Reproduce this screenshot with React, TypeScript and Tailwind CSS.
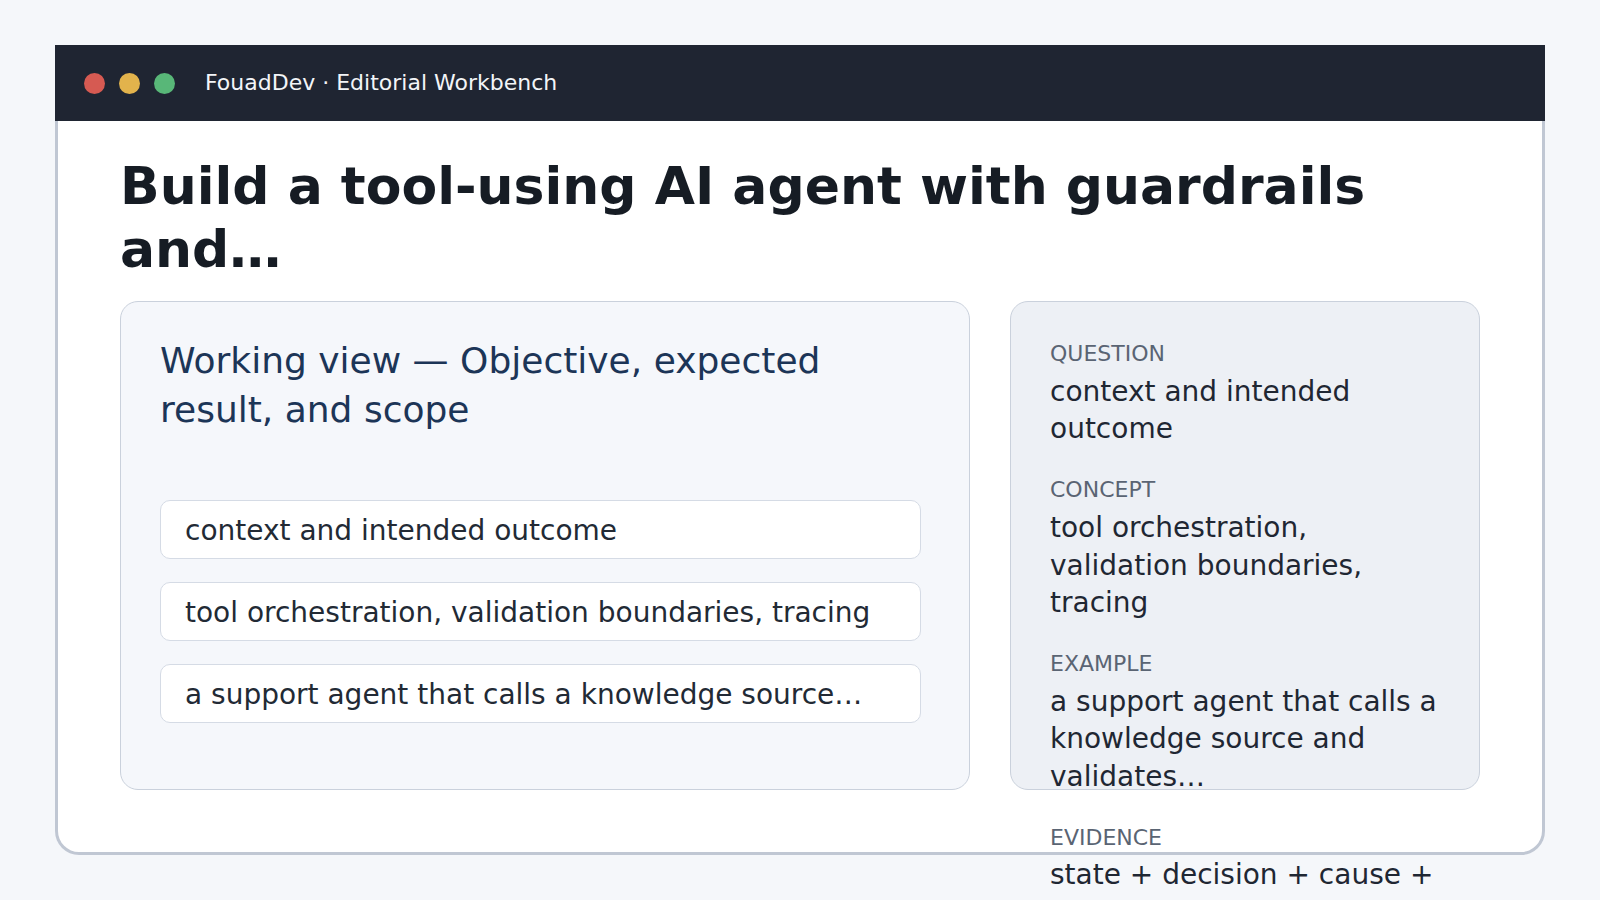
import React from "react";

const rows = [
  "context and intended outcome",
  "tool orchestration, validation boundaries, tracing",
  "a support agent that calls a knowledge source…",
];

const sections = [
  { label: "QUESTION", body: "context and intended outcome" },
  { label: "CONCEPT", body: "tool orchestration, validation boundaries, tracing" },
  { label: "EXAMPLE", body: "a support agent that calls a knowledge source and validates…" },
  { label: "EVIDENCE", body: "state + decision + cause + next action" },
];

export default function App() {
  return (
    <div
      className="min-h-screen bg-[#f5f7fa] pt-[45px] px-[55px]"
      style={{ fontFamily: '"DejaVu Sans", Verdana, sans-serif' }}
    >
      <div>
        <div className="h-[76px] bg-[#1f2532] flex items-center pl-[29px]">
          <div className="flex items-center gap-[14px]">
            <span className="w-[21px] h-[21px] rounded-full bg-[#d65a52]" />
            <span className="w-[21px] h-[21px] rounded-full bg-[#e2b34c]" />
            <span className="w-[21px] h-[21px] rounded-full bg-[#58b778]" />
          </div>
          <span className="ml-[30px] text-[22px] text-[#f3f5f8] leading-none">
            FouadDev · Editorial Workbench
          </span>
        </div>
        <div className="h-[734px] bg-white border-[3px] border-t-0 border-[#c0c7d3] rounded-b-[24px] pl-[62px] pr-[62px] pt-[34px]">
          <h1 className="text-[52px] leading-[63px] font-bold text-[#161c24]">
            Build a tool-using AI agent with guardrails and…
          </h1>
          <div className="mt-[20px] flex gap-[40px]">
            <div className="w-[850px] h-[489px] shrink-0 rounded-[18px] border border-[#cad1dc] bg-[#f5f7fb] pl-[39px] pt-[35px]">
              <div className="w-[720px] text-[36px] leading-[48.6px] text-[#1c3557]">
                Working view — Objective, expected result, and scope
              </div>
              <div className="mt-[66px] flex flex-col gap-[23px] w-[761px]">
                {rows.map((r) => (
                  <div
                    key={r}
                    className="bg-white border border-[#d5dbe5] rounded-[10px] px-[24px] pt-[11px] pb-[8px] text-[28px] leading-[38px] text-[#222a35] whitespace-nowrap"
                  >
                    {r}
                  </div>
                ))}
              </div>
            </div>
            <div className="flex-1 h-[489px] rounded-[18px] border border-[#cad1dc] bg-[#edf0f5] pl-[39px] pr-[37px] pt-[37px]">
              <div className="flex flex-col gap-[27px]">
                {sections.map((s) => (
                  <div key={s.label}>
                    <div className="text-[22px] leading-[29.7px] text-[#5a6473]">{s.label}</div>
                    <div className="mt-[4px] text-[28px] leading-[37.7px] text-[#1f2733]">{s.body}</div>
                  </div>
                ))}
              </div>
            </div>
          </div>
        </div>
      </div>
    </div>
  );
}
